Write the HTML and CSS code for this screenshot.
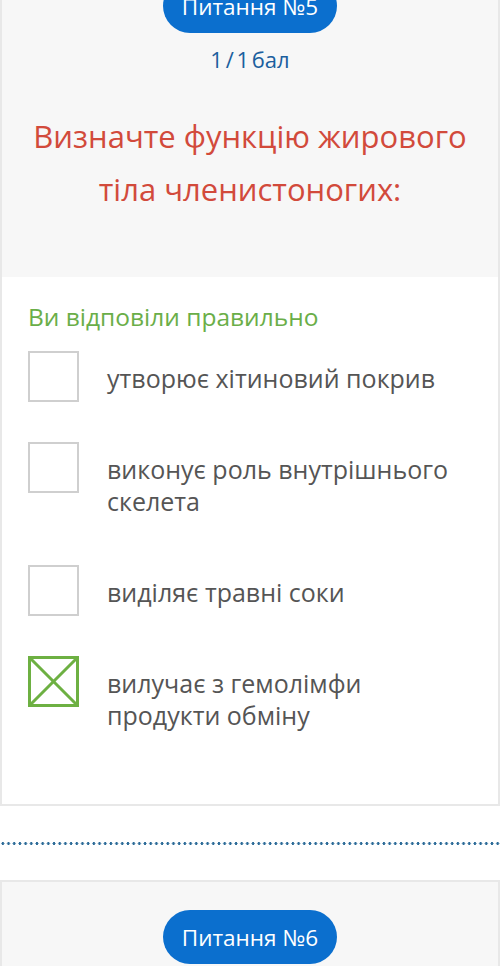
FILE: index.html
```html
<!DOCTYPE html>
<html lang="uk">
<head>
  <meta charset="UTF-8">
  <meta name="viewport" content="width=device-width, initial-scale=1.0">
  <title>Тест</title>
  <link rel="stylesheet" href="styles.css">
</head>
<body>
  <div class="quiz">
    <div class="question">
      <div class="question-head">
        <span class="q-number">Питання №5</span>
        <div class="score">1 / 1 бал</div>
        <h2 class="q-title">Визначте функцію жирового тіла членистоногих:</h2>
      </div>
      <div class="question-body">
        <div class="verdict">Ви відповіли правильно</div>

        <div class="option">
          <span class="box"></span>
          <span class="label">утворює хітиновий покрив</span>
        </div>
        <div class="option">
          <span class="box"></span>
          <span class="label">виконує роль внутрішнього скелета</span>
        </div>
        <div class="option">
          <span class="box"></span>
          <span class="label">виділяє травні соки</span>
        </div>
        <div class="option">
          <span class="box checked">
            <svg viewBox="0 0 51 51" width="51" height="51">
              <rect x="1.5" y="1.5" width="48" height="48" fill="none" stroke="#6db042" stroke-width="3"/>
              <line x1="2" y1="2" x2="49" y2="49" stroke="#6db042" stroke-width="3"/>
              <line x1="49" y1="2" x2="2" y2="49" stroke="#6db042" stroke-width="3"/>
            </svg>
          </span>
          <span class="label">вилучає з гемолімфи продукти обміну</span>
        </div>
      </div>
    </div>

    <div class="divider"></div>

    <div class="question">
      <div class="question-head">
        <span class="q-number">Питання №6</span>
      </div>
    </div>
  </div>
</body>
</html>
```

FILE: styles.css
```css
body {
  margin: 0;
  font-family: "Open Sans", Arial, sans-serif;
  background: #fff;
  overflow: hidden;
}

/* page is scrolled a bit, the first card starts above the window */
.quiz {
  margin-top: -51px;
}

.question {
  border: 2px solid #e8e8e8;
  background: #fff;
}

.question-head {
  display: flex;
  flex-direction: column;
  align-items: center;
  background: #f7f7f7;
  text-align: center;
  padding: 28px 0 61px;
}

.q-number {
  display: block;
  height: 54px;
  line-height: 56px;
  width: 174px;
  border-radius: 27px;
  background: #0b6fce;
  color: #fff;
  font-size: 22.5px;
}

.score {
  margin-top: 12px;
  font-size: 22px;
  line-height: 28px;
  word-spacing: -3px;
  color: #1b5f9e;
}

.q-title {
  margin: 37px 20px 0;
  font-size: 31px;
  font-weight: normal;
  line-height: 53px;
  color: #d24a3b;
}

.question-body {
  padding: 24px 0 25px 26px;
}

.verdict {
  font-size: 24.5px;
  line-height: 32px;
  color: #6aae48;
  margin-bottom: 18px;
}

.option {
  display: flex;
  align-items: flex-start;
}

.box {
  flex: none;
  width: 47px;
  height: 47px;
  border: 2px solid #cfcfcf;
}

.box.checked {
  border: none;
  width: 51px;
  height: 51px;
}

.box svg {
  display: block;
}

.label {
  padding: 11px 30px 48px 28px;
  font-size: 25px;
  line-height: 32px;
  color: #555;
}

.divider {
  margin: 36px 0 35px;
  height: 3px;
  background-image: radial-gradient(circle, #2c6b98 1.3px, transparent 1.6px);
  background-size: 5.7px 3px;
  background-repeat: repeat-x;
}
```
